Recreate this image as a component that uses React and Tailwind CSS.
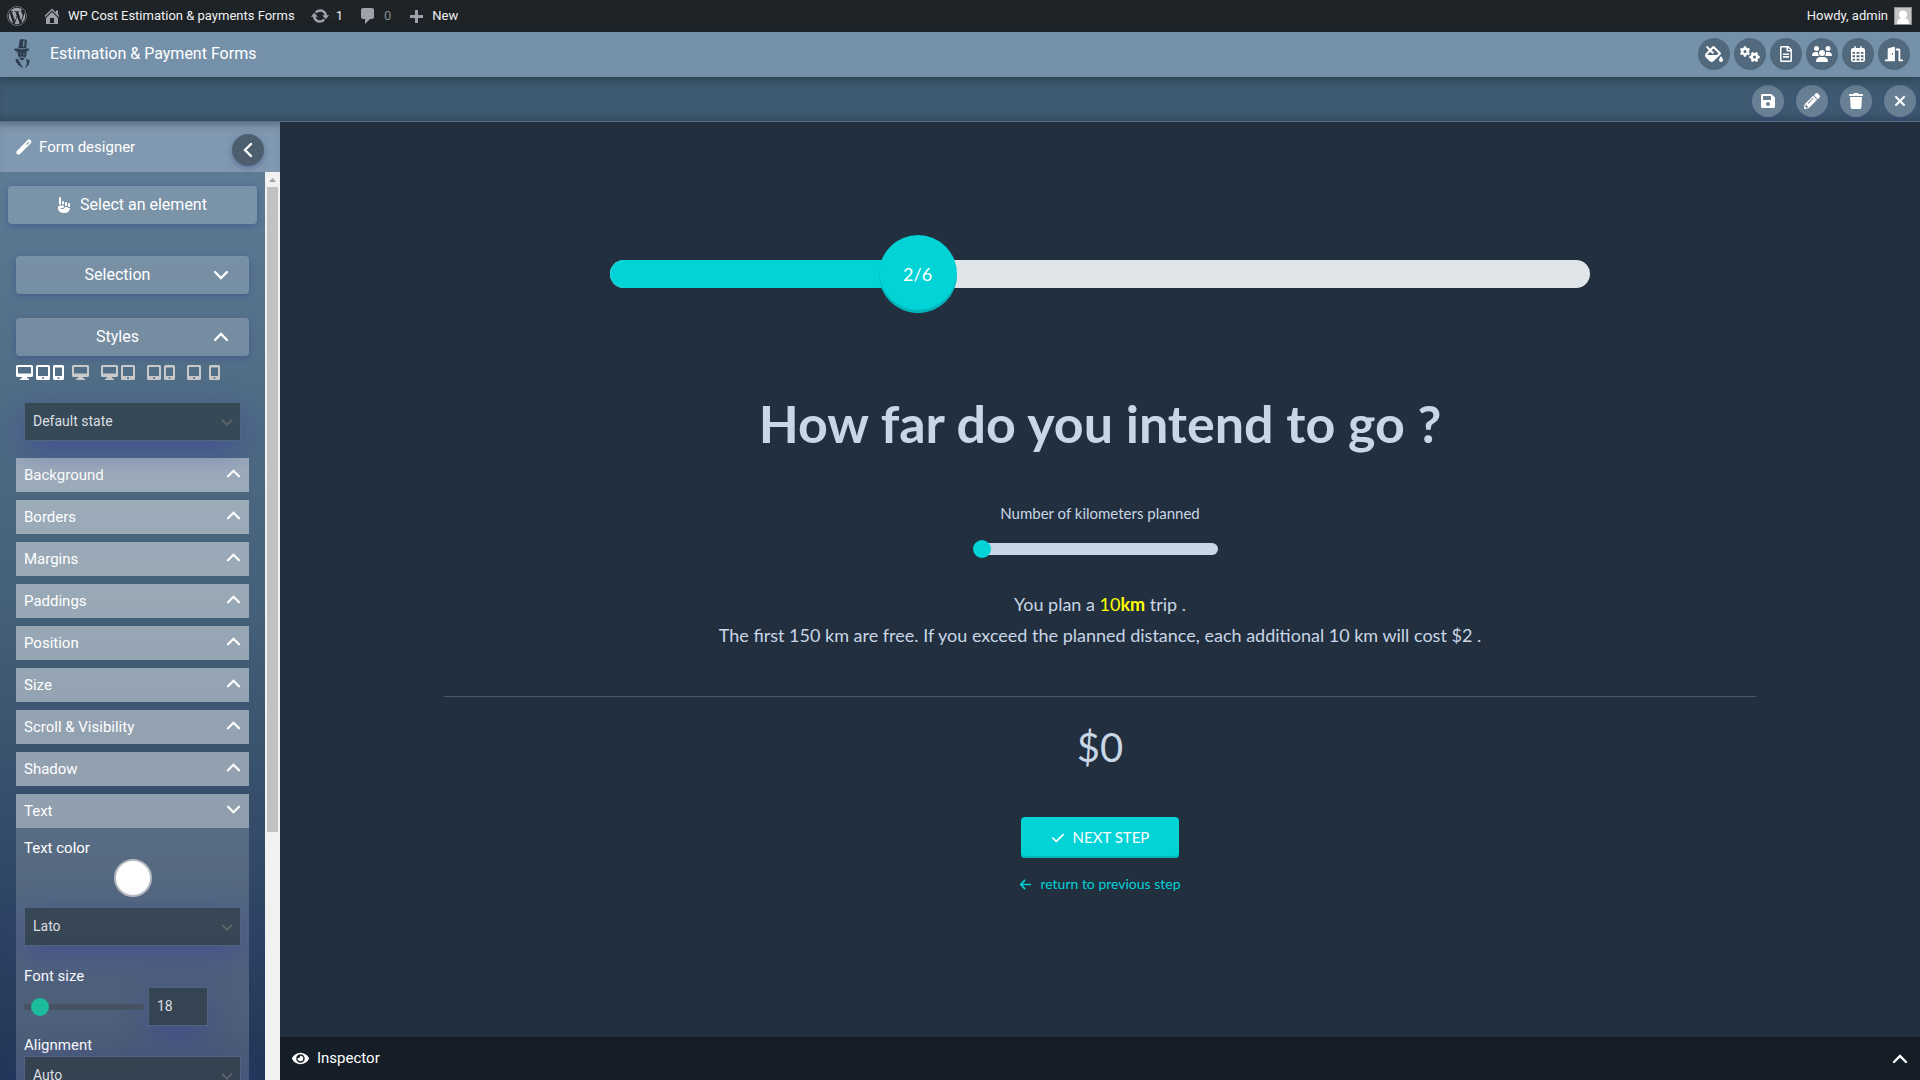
import React from "react";
import {
  FaWordpress, FaFillDrip, FaRegFileAlt, FaDoorOpen, FaSave, FaPencilAlt, FaTrash, FaEye,
} from "react-icons/fa";
import { FaXmark, FaCheck, FaArrowLeft, FaHandPointUp, FaRegCalendarDays, FaUsers, FaGears } from "react-icons/fa6";

function Dash({ d }) {
  return (
    <svg viewBox="0 0 20 20" className="size-5 shrink-0 text-[#9ca2a7]" fill="currentColor" aria-hidden="true">
      <path d={d} />
    </svg>
  );
}

const HOME = "M16 8.5l1.53 1.53-1.06 1.06L10 4.6l-6.47 6.49-1.06-1.06L10 2.5l4 4v-2h2v4zm-6-2.46l6 5.99V18H4v-5.97zM12 17v-5H8v5h4z";
const UPDATE = "M10.2 3.28c3.53 0 6.43 2.61 6.92 6h2.08l-3.5 4-3.5-4h2.32c-.45-1.97-2.21-3.45-4.32-3.45-1.45 0-2.73.71-3.54 1.78L4.95 5.66C6.23 4.2 8.11 3.28 10.2 3.28zm-.4 13.44c-3.52 0-6.43-2.61-6.92-6H.8l3.5-4c1.17 1.33 2.33 2.67 3.5 4H5.48c.45 1.97 2.21 3.45 4.32 3.45 1.45 0 2.73-.71 3.54-1.78l1.71 1.95c-1.28 1.46-3.15 2.38-5.25 2.38z";
const COMMENT = "M5 2h9c1.1 0 2 .9 2 2v7c0 1.1-.9 2-2 2h-2l-5 5v-5H5c-1.1 0-2-.9-2-2V4c0-1.1.9-2 2-2z";
const PLUS = "M17 9v3h-5v5H9v-5H4V9h5V4h3v5h5z";

function Chevron({ dir = "up", className = "" }) {
  const d = { up: "M2 9 8 3l6 6", down: "M2 3l6 6 6-6", left: "M11 1 5 7l6 6" }[dir];
  return (
    <svg viewBox={dir === "left" ? "0 0 16 14" : "0 0 16 12"} className={className} fill="none" stroke="currentColor" strokeWidth="2.4" strokeLinecap="round" aria-hidden="true">
      <path d={d} />
    </svg>
  );
}

function Logo() {
  return (
    <svg viewBox="0 0 16 30" className="h-[30px] w-4" fill="#2c3e50" aria-hidden="true">
      <path d="M5.800.5C8.200-.1 10.800.1 13 1l-.8 8.200H4.400z" />
      <path d="M0 10.200c.8-1 2.600-1 4.400-.4 3 .8 6 .6 8-.2 1.200-.4 2.400-.2 3 .4-.6 1.800-2.400 2.800-4.600 3.200-3.800.6-9.800 0-10.800-3z" />
      <path d="M3.600 12.400h9l-.2 3.800-1.200 2.600-1.400-1-1.400.6-1.800-.6-1.400 1-1.200-2.400z" />
      <path d="M5 18.600l1.600.6 2-.6 2 .4-.8 1.600-1.600 1-1.800-.8z" />
      <path d="M5.600 14.600h1.800l-.4 1zM9 14.800h1.800l-.4 1-1-.1zM6.400 17.400h3.600l-1.800.6z" fill="#7591aa" />
      <path d="M1.600 20.200l1.800-.6 2.200 3.200 3.800 6.600-6-3.800 1-.6-2.400-1.600zM12 19.800l3.600 1.600-.8 4-3.800 4.200 2-5z" />
      <path d="M9.400 1.600l1.300.1-.6 5.800-1.200-.1z" fill="#7591aa" />
    </svg>
  );
}

function Wand() {
  return (
    <svg viewBox="0 0 16 16" className="size-4" fill="currentColor" aria-hidden="true">
      <path fillRule="evenodd" d="M11.600 1a2 2 0 0 1 2.800 0l.4.4a2 2 0 0 1 0 2.800L4 15a2.100 2.100 0 0 1-3 0 2.100 2.100 0 0 1 0-3zM12.800 2.400 10 5.200l.8.800 2.800-2.800z" />
    </svg>
  );
}

function Round({ label, tone, children }) {
  return (
    <button aria-label={label} className={"flex size-8 items-center justify-center rounded-full text-white " + tone}>
      {children}
    </button>
  );
}

const DARK = "bg-[#52687c]";
const LIGHT = "bg-[#687f94] shadow-[0_2px_6px_rgba(60,70,140,.5)]";
const BTN = "flex h-[38px] items-center rounded-sm bg-white/20 text-white shadow-[0_2px_6px_rgba(60,70,140,.5)]";
const FIELD = "h-[39px] appearance-none border border-[#4e6680] bg-[rgba(38,50,56,.6)] px-2 pb-[2px] text-sm text-[#dcdfe2] outline-none shadow-[0_10px_30px_rgba(60,60,160,.5)]";

const SECTIONS = ["Background", "Borders", "Margins", "Paddings", "Position", "Size", "Scroll & Visibility", "Shadow", "Text"];

function Field({ label, value }) {
  return (
    <div className="relative mx-2 flex">
      <select aria-label={label} defaultValue={value} className={"w-full " + FIELD}>
        <option>{value}</option>
      </select>
      <Chevron dir="down" className="pointer-events-none absolute top-4 right-2 h-[9px] w-3 text-[#5d6468]" />
    </div>
  );
}

function Device({ active, label, children }) {
  return (
    <button aria-label={label} className={"flex items-center gap-[3px] " + (active ? "text-white" : "text-[#c9c9c9]")}>
      {children}
    </button>
  );
}

function Desk() {
  return (
    <svg viewBox="0 0 17 15" className="h-[15px] w-[17px]" fill="currentColor" aria-hidden="true">
      <path fillRule="evenodd" d="M1.500 0h14A1.500 1.500 0 0 1 17 1.500v9a1.500 1.500 0 0 1-1.500 1.500H11l.3 1.500H13V15H4v-1.500h1.700L6 12H1.500A1.500 1.500 0 0 1 0 10.500v-9A1.500 1.500 0 0 1 1.500 0zM2 2v6.500h13V2z" />
    </svg>
  );
}

function Tab() {
  return (
    <svg viewBox="0 0 14 15" className="h-[15px] w-[14px]" fill="currentColor" aria-hidden="true">
      <path fillRule="evenodd" d="M1.500 0h11A1.500 1.500 0 0 1 14 1.500v12a1.500 1.500 0 0 1-1.500 1.500h-11A1.500 1.500 0 0 1 0 13.500v-12A1.500 1.500 0 0 1 1.500 0zM2 2v9h10V2zM6 12.200v1.500h2v-1.500z" />
    </svg>
  );
}

function Mob() {
  return (
    <svg viewBox="0 0 11 15" className="h-[15px] w-[11px]" fill="currentColor" aria-hidden="true">
      <path fillRule="evenodd" d="M1.500 0h8A1.500 1.500 0 0 1 11 1.500v12A1.500 1.500 0 0 1 9.500 15h-8A1.500 1.500 0 0 1 0 13.500v-12A1.500 1.500 0 0 1 1.500 0zM2 2.500V11h7V2.500zM4.500 12.200v1.500h2v-1.500z" />
    </svg>
  );
}

function AdminBar() {
  return (
    <nav className="flex h-8 shrink-0 items-center bg-[#1d2327] pr-2 pl-[7px] text-[13px] text-[#f0f0f1]">
      <a href="#wp" aria-label="About WordPress" className="mr-[15px]"><FaWordpress className="size-5 text-[#9ca2a7]" /></a>
      <a href="#site" className="mr-[15px] flex items-center gap-[6px]"><Dash d={HOME} />WP Cost Estimation &amp; payments Forms</a>
      <a href="#updates" className="mr-[15px] flex items-center gap-[6px]"><Dash d={UPDATE} />1</a>
      <a href="#comments" className="mr-[15px] flex items-center gap-[6px] text-[#848a8f]"><Dash d={COMMENT} />0</a>
      <a href="#new" className="flex items-center gap-[6px]"><Dash d={PLUS} />New</a>
      <a href="#profile" className="ml-auto flex items-center gap-[6px]">
        Howdy, admin
        <svg viewBox="0 0 18 18" className="size-[18px]" aria-hidden="true">
          <rect width="18" height="18" fill="#8c8f94" />
          <rect x="1" y="1" width="16" height="16" fill="#c5c5c5" />
          <circle cx="9" cy="7.500" r="4" fill="#fff" />
          <path d="M3 17c0-4 2-6 6-6s6 2 6 6z" fill="#fff" />
        </svg>
      </a>
    </nav>
  );
}

function Sidebar() {
  return (
    <aside className="flex w-[280px] shrink-0 flex-col bg-linear-to-b from-[#5f7e98] via-[#456079] to-[#223658] text-white">
      <div className="flex h-[50px] shrink-0 items-center bg-[#8199b0] pr-4 pl-4 shadow-[inset_0_8px_8px_-6px_rgba(40,50,70,.5)]">
        <Wand />
        <h2 className="ml-[7px] text-[15px]">Form designer</h2>
        <button aria-label="Collapse panel" className="mt-[6px] ml-auto flex size-8 items-center justify-center rounded-full bg-[#4d5e6e] shadow-[0_2px_6px_rgba(60,70,140,.5)]">
          <Chevron dir="left" className="h-[14px] w-4" />
        </button>
      </div>
      <div className="flex min-h-0 flex-1">
        <div className="flex min-w-0 flex-1 flex-col overflow-hidden">
          <div className="flex shrink-0 flex-col px-2 pt-[14px]">
            <button className={BTN + " justify-center gap-2 pr-[2px]"}><FaHandPointUp className="size-4" />Select an element</button>
          </div>
          <div className="flex shrink-0 flex-col px-4 pt-8">
            <button className={BTN + " mb-6 pr-5 pl-[6px]"}><span className="flex-1">Selection</span><Chevron dir="down" className="h-3 w-4" /></button>
            <button className={BTN + " pr-5 pl-[6px]"}><span className="flex-1">Styles</span><Chevron className="h-3 w-4" /></button>
            <div className="mt-2 flex h-4 items-center">
              <Device active label="All devices"><Desk /><Tab /><Mob /></Device>
              <div className="ml-2"><Device label="Desktop"><Desk /></Device></div>
              <div className="ml-3"><Device label="Desktop and tablet"><Desk /><Tab /></Device></div>
              <div className="ml-3"><Device label="Tablet and phone"><Tab /><Mob /></Device></div>
              <div className="ml-3"><Device label="Tablet"><Tab /></Device></div>
              <div className="ml-2"><Device label="Phone"><Mob /></Device></div>
            </div>
            <div className="mt-[22px] mb-[17px]"><Field label="State" value="Default state" /></div>
            <div className="flex flex-col gap-2">
              {SECTIONS.map((s) => (
                <button key={s} className="flex h-[34px] items-center justify-between bg-[rgba(236,240,241,.5)] px-2 text-[15px] text-white">
                  {s}
                  <Chevron dir={s === "Text" ? "down" : "up"} className="mb-1 h-[11px] w-[15px]" />
                </button>
              ))}
            </div>
            <div className="flex flex-col bg-[rgba(236,240,241,.2)] pt-[9px] text-[15px]">
              <div className="flex flex-col px-2">
                <span className="leading-[22px]">Text color</span>
                <button aria-label="Text color" className="size-[38px] self-center rounded-full border-2 border-[#b4b9c0] bg-white" />
              </div>
              <div className="mt-[10px]"><Field label="Font family" value="Lato" /></div>
              <label htmlFor="fs" className="mx-2 mt-[19px] leading-[22px]">Font size</label>
              <div className="mx-2 flex items-center gap-1">
                <div className="relative flex h-[18px] w-[120px] items-center">
                  <div className="h-[6px] w-full rounded-full bg-[#445262]" />
                  <input id="fs" type="range" min="1" max="120" defaultValue="18" className="absolute inset-0 w-full cursor-pointer opacity-0" />
                  <div className="pointer-events-none absolute left-[7px] size-[18px] rounded-full bg-[#1abc9c]" />
                </div>
                <input aria-label="Font size value" type="text" defaultValue="18" className={"w-[60px] " + FIELD} />
              </div>
              <span className="mx-2 mt-2 leading-[22px]">Alignment</span>
              <Field label="Alignment" value="Auto" />
            </div>
          </div>
        </div>
        <div className="flex w-[15px] shrink-0 flex-col items-center bg-[#f1f1f1]" aria-hidden="true">
          <svg viewBox="0 0 15 15" className="size-[15px] shrink-0"><path d="M7.500 6 11 10H4z" fill="#a3a3a3" /></svg>
          <div className="h-[71%] w-[11px] bg-[#c1c1c1]" />
        </div>
      </div>
    </aside>
  );
}

function Main() {
  return (
    <div className="flex min-w-0 flex-1 flex-col bg-[#222f3f] font-['Lato',sans-serif] text-[#c8d6e5]">
      <main className="flex flex-1 flex-col items-center">
        <div className="relative mt-[138px] flex h-7 w-[60%] max-w-[980px] items-center rounded-full bg-[#e0e5e9]" role="progressbar" aria-valuenow={2} aria-valuemax={6} aria-label="Progress">
          <div className="h-full w-[31%] rounded-l-full bg-[#01d3d7]" />
          <div className="absolute left-[27%] ml-1 flex size-[78px] items-center justify-center rounded-full bg-[#01d3d7] text-lg text-white shadow-[inset_0_-3px_0_#01b5ba]">2/6</div>
        </div>
        <h1 className="mt-[100px] text-[52px] leading-[70px] font-bold">How far do you intend to go ?</h1>
        <label htmlFor="km" className="mt-[45px] text-[15px] leading-5">Number of kilometers planned</label>
        <div className="relative mt-[17px] mr-[9px] flex h-[18px] w-[245px] items-center">
          <div className="ml-1 h-3 w-full rounded-full bg-[#c8d6e5]" />
          <input id="km" type="range" min="10" max="1000" defaultValue="10" className="absolute inset-0 w-full cursor-pointer opacity-0" />
          <div className="pointer-events-none absolute left-0 size-[18px] rounded-full bg-[#01d3d7]" />
        </div>
        <p className="mt-[31px] text-center text-lg leading-[31px]">
          You plan a <span className="text-[#ffff00]">10<b>km</b></span> trip .
          <br />
          The first 150 km are free. If you exceed the planned distance, each additional 10 km will cost $2 .
        </p>
        <hr className="mt-[45px] w-4/5 border-[#4a5767]" />
        <div className="mt-5 text-[40px] leading-[60px]">$0</div>
        <button className="mt-10 flex h-[41px] items-center gap-2 rounded-sm bg-[#01d3d7] px-[30px] text-[15px] text-white shadow-[inset_0_-2px_0_#01b5ba]">
          <FaCheck className="size-[14px]" />NEXT STEP
        </button>
        <a href="#previous" className="mt-4 flex items-center gap-2 text-sm leading-5 text-[#01d3d7]">
          <FaArrowLeft className="size-[13px]" />return to previous step
        </a>
      </main>
      <button className="flex h-[43px] shrink-0 items-center bg-[#151d26] px-3 font-['Roboto',sans-serif] text-[15px] text-white">
        <FaEye className="mr-2 size-[17px]" />Inspector
        <Chevron className="ml-auto h-3 w-4" />
      </button>
    </div>
  );
}

export default function App() {
  return (
    <div className="flex h-screen flex-col overflow-hidden bg-[#222f3f] font-['Roboto',sans-serif] text-base">
      <AdminBar />
      <header className="relative flex h-[45px] shrink-0 items-center bg-[#7591aa] pr-[10px] pb-px pl-[14px] shadow-[0_3px_10px_rgba(30,45,60,.6)]">
        <Logo />
        <span className="ml-5 text-white">Estimation &amp; Payment Forms</span>
        <div className="ml-auto flex gap-1">
          <Round label="Colors" tone={DARK}><FaFillDrip size={18} /></Round>
          <Round label="Settings" tone={DARK}><FaGears size={20} /></Round>
          <Round label="Documentation" tone={DARK}><FaRegFileAlt size={16} /></Round>
          <Round label="Customers" tone={DARK}><FaUsers size={20} /></Round>
          <Round label="Calendar" tone={DARK}><FaRegCalendarDays size={16} /></Round>
          <Round label="Exit" tone={DARK}><FaDoorOpen size={18} /></Round>
        </div>
      </header>
      <div className="flex h-[45px] shrink-0 items-center justify-end gap-3 border-b border-[#5b7287] bg-[#3f5b72] pt-[3px] pr-1 shadow-[inset_0_-6px_8px_-4px_rgba(30,45,65,.5)]">
        <Round label="Save" tone={LIGHT}><FaSave size={16} /></Round>
        <Round label="Edit" tone={LIGHT}><FaPencilAlt size={16} /></Round>
        <Round label="Delete" tone={LIGHT}><FaTrash size={16} /></Round>
        <Round label="Close" tone={LIGHT}><FaXmark size={16} /></Round>
      </div>
      <div className="flex min-h-0 flex-1">
        <Sidebar />
        <Main />
      </div>
    </div>
  );
}
